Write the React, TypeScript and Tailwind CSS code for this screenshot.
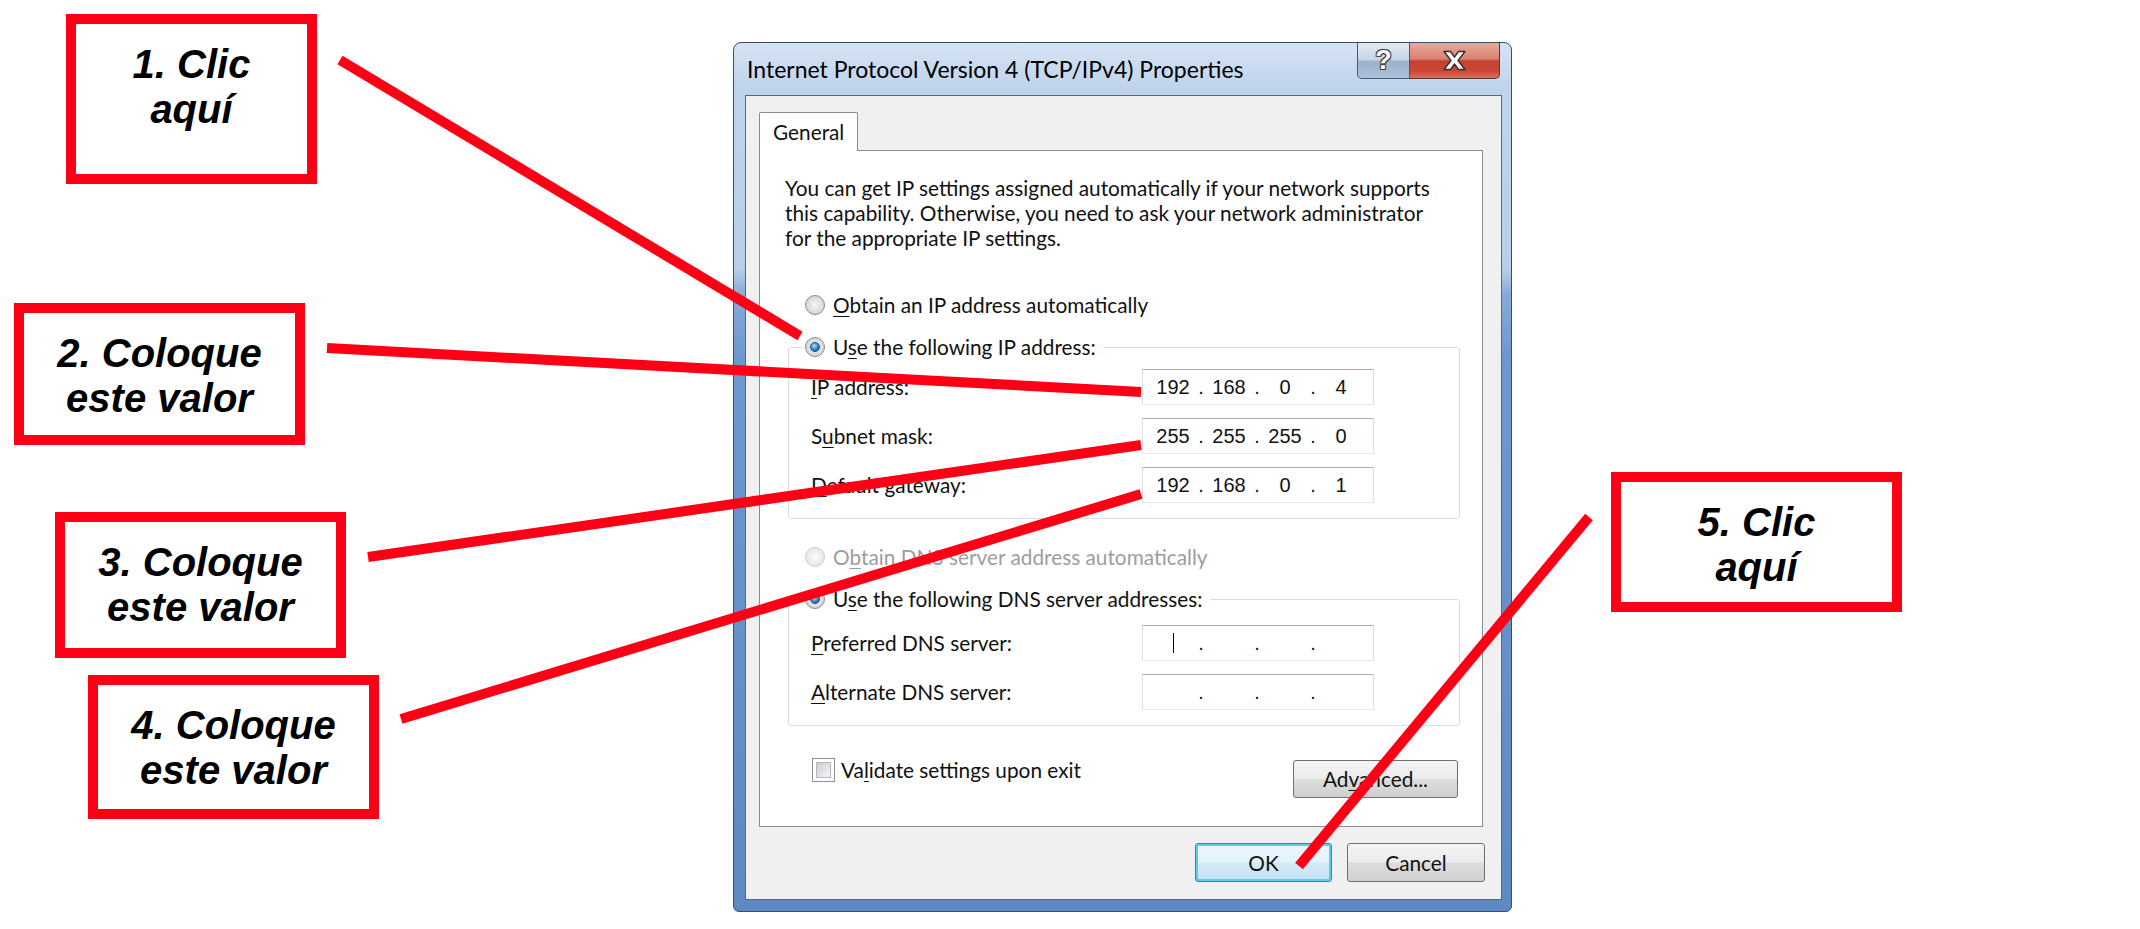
import { Fragment } from "react";

const ui = "font-['Lato','Noto_Sans',sans-serif] text-[20.8px] text-[#111]";

function Callout({ className, lines }: { className: string; lines: string[] }) {
  return (
    <div
      className={`absolute border-[10px] border-[#fe0016] bg-white flex flex-col items-center pt-[18px] font-['Liberation_Sans',Arial,sans-serif] font-bold italic text-[40px] leading-[45px] text-black ${className}`}
    >
      {lines.map((l) => (
        <span key={l} className="whitespace-nowrap">
          {l}
        </span>
      ))}
    </div>
  );
}

function Radio({ checked, disabled }: { checked?: boolean; disabled?: boolean }) {
  return (
    <span
      className={`w-[20px] h-[20px] rounded-full border shrink-0 flex items-center justify-center ${
        disabled
          ? "border-[#cfcfcf] bg-[radial-gradient(circle,#fbfbfb_0%,#e6e6e6_75%,#f2f2f2_100%)]"
          : "border-[#8a8c8f] bg-[radial-gradient(circle,#f7f7f7_0%,#d6d6d6_70%,#ededed_100%)]"
      }`}
    >
      {checked && (
        <span className="w-[10px] h-[10px] rounded-full border border-[#174a76] bg-[radial-gradient(circle_at_40%_35%,#a6e4ff_0%,#2f8fd0_50%,#0f4674_100%)]" />
      )}
    </span>
  );
}

function IpField({ octets, caret }: { octets: string[]; caret?: boolean }) {
  return (
    <div className="w-[232px] h-[36px] bg-white border border-[#dbdfe6] border-t-[#abadb3] border-b-[#e3e9ef] flex items-center pl-[8px] font-['Liberation_Sans',Arial,sans-serif] text-[20px] text-[#111]">
      {octets.map((o, i) => (
        <Fragment key={i}>
          <span className="w-[44px] h-[24px] flex items-center justify-center">
            {caret && i === 0 ? <span className="w-px h-[20px] bg-black" /> : o}
          </span>
          {i < 3 && <span className="w-[12px] text-center leading-[24px]">.</span>}
        </Fragment>
      ))}
    </div>
  );
}

function Label({ pre, u, post }: { pre?: string; u: string; post: string }) {
  return (
    <span className="whitespace-nowrap">
      {pre}
      <span className="underline underline-offset-[3px] decoration-1">{u}</span>
      {post}
    </span>
  );
}

function Group({
  header,
  rows,
  topGap,
}: {
  header: React.ReactNode;
  rows: { label: React.ReactNode; octets: string[]; caret?: boolean }[];
  topGap: string;
}) {
  return (
    <div className="ml-[28px] w-[672px] border border-[#d5dfe5] rounded-[3px] pb-[15px]">
      <div className="-mt-[13px] ml-[14px] w-fit bg-white pl-[2px] pr-[8px] h-[24px] flex items-center gap-[8px]">
        <Radio checked />
        {header}
      </div>
      <div className={`${topGap} ml-[22px] grid grid-cols-[331px_232px] gap-y-[13px] items-center`}>
        {rows.map((r, i) => (
          <Fragment key={i}>
            {r.label}
            <IpField octets={r.octets} caret={r.caret} />
          </Fragment>
        ))}
      </div>
    </div>
  );
}

function Dialog() {
  return (
    <div className="w-[779px] h-[870px] flex flex-col rounded-t-[8px] rounded-b-[6px] border border-[#3d4c5e] bg-[linear-gradient(180deg,#d5e4f4_0%,#bfd4ec_5%,#b8cfe9_26%,#86aad9_29%,#6d98cf_36%,#5d89c4_100%)]">
      <div className="h-[52px] flex justify-between items-start">
        <span className="font-['Lato','Noto_Sans',sans-serif] text-[23px] ml-[13px] mt-[13px] leading-[26px] text-black whitespace-nowrap">
          Internet Protocol Version 4 (TCP/IPv4) Properties
        </span>
        <div className="mr-[11px] flex h-[36px]">
          <div className="w-[53px] border border-t-0 border-[#4a596b] rounded-bl-[5px] bg-[linear-gradient(180deg,#e2ebf5_0%,#c6d4e5_48%,#9cb2cd_52%,#adc1d9_100%)] flex items-center justify-center">
            <span className="font-['Liberation_Sans',Arial,sans-serif] font-bold text-[27px] leading-none text-white [text-shadow:1px_1px_0_#3a3a3a,-1px_-1px_0_#3a3a3a,1px_-1px_0_#3a3a3a,-1px_1px_0_#3a3a3a]">
              ?
            </span>
          </div>
          <div className="w-[90px] border border-t-0 border-l-0 border-[#4f3a36] rounded-br-[5px] bg-[linear-gradient(180deg,#eaa99b_0%,#d88272_45%,#c4402f_52%,#cb4735_80%,#d9705d_100%)] flex items-center justify-center">
            <svg width="25" height="21" viewBox="0 0 25 21">
              <polygon
                points="2,1.5 8.5,1.5 12.5,7 16.5,1.5 23,1.5 16,10.5 23,19.5 16.5,19.5 12.5,14 8.5,19.5 2,19.5 9,10.5"
                fill="#fff"
                stroke="#3b2e2e"
                strokeWidth="1.4"
                strokeLinejoin="round"
              />
            </svg>
          </div>
        </div>
      </div>

      <div className={`${ui} ml-[11px] mr-[9px] mb-[11px] flex-1 border border-[#58697d] bg-[#f0f0f0] flex flex-col`}>
        <div className="relative z-10 mt-[16px] ml-[13px] -mb-px w-[99px] h-[39px] bg-white border border-b-0 border-[#898c95] rounded-t-[2px] pl-[13px] flex items-center">
          General
        </div>
        <div className="ml-[13px] w-[724px] h-[677px] bg-white border border-[#898c95] flex flex-col">
          <p className="ml-[25px] mt-[24px] leading-[25px] whitespace-nowrap">
            You can get IP settings assigned automatically if your network supports
            <br />
            this capability. Otherwise, you need to ask your network administrator
            <br />
            for the appropriate IP settings.
          </p>

          <div className="mt-[43px] ml-[45px] h-[24px] flex items-center gap-[8px]">
            <Radio />
            <Label u="O" post="btain an IP address automatically" />
          </div>

          <div className="mt-[30px]">
            <Group
              topGap="mt-[10px]"
              header={<Label pre="U" u="s" post="e the following IP address:" />}
              rows={[
                { label: <Label u="I" post="P address:" />, octets: ["192", "168", "0", "4"] },
                { label: <Label pre="S" u="u" post="bnet mask:" />, octets: ["255", "255", "255", "0"] },
                { label: <Label u="D" post="efault gateway:" />, octets: ["192", "168", "0", "1"] },
              ]}
            />
          </div>

          <div className="mt-[26px] ml-[45px] h-[24px] flex items-center gap-[8px] text-[#9d9d9d]">
            <Radio disabled />
            <Label pre="O" u="b" post="tain DNS server address automatically" />
          </div>

          <div className="mt-[30px]">
            <Group
              topGap="mt-[14px]"
              header={<Label pre="U" u="s" post="e the following DNS server addresses:" />}
              rows={[
                { label: <Label u="P" post="referred DNS server:" />, octets: ["", "", "", ""], caret: true },
                { label: <Label u="A" post="lternate DNS server:" />, octets: ["", "", "", ""] },
              ]}
            />
          </div>

          <div className="mt-[32px] ml-[52px] mr-[24px] flex justify-between items-start">
            <div className="flex items-center gap-[6px] h-[24px]">
              <span className="w-[23px] h-[24px] border border-[#8e8f8f] bg-white p-[3px] shrink-0">
                <span className="block w-full h-full border border-[#b4b8bd] bg-[linear-gradient(135deg,#c8ccd2_0%,#e4e6e9_60%,#f7f7f7_100%)]" />
              </span>
              <Label pre="Va" u="l" post="idate settings upon exit" />
            </div>
            <button className="mt-[2px] w-[165px] h-[38px] rounded-[3px] border border-[#707070] bg-[linear-gradient(180deg,#f4f4f4_0%,#ececec_48%,#dddddd_52%,#cfcfcf_100%)] flex items-center justify-center">
              <Label pre="Ad" u="v" post="anced..." />
            </button>
          </div>
        </div>

        <div className="mt-[16px] mr-[16px] flex justify-end gap-[15px]">
          <button className="w-[137px] h-[39px] rounded-[3px] border border-[#3c7fb1] shadow-[inset_0_0_0_2px_#5ccaf3] bg-[linear-gradient(180deg,#edf7fd_0%,#e2f2fb_48%,#d2ebf8_52%,#c4e3f4_100%)] flex items-center justify-center">
            OK
          </button>
          <button className="w-[138px] h-[39px] rounded-[3px] border border-[#707070] bg-[linear-gradient(180deg,#f4f4f4_0%,#ececec_48%,#dddddd_52%,#cfcfcf_100%)] flex items-center justify-center">
            Cancel
          </button>
        </div>
      </div>
    </div>
  );
}

export default function App() {
  return (
    <div className="relative w-[2140px] h-[929px] bg-white overflow-hidden">
      <div className="pt-[42px] pl-[733px]">
        <Dialog />
      </div>

      <Callout className="left-[66px] top-[14px] w-[251px] h-[170px]" lines={["1. Clic", "aquí"]} />
      <Callout className="left-[14px] top-[303px] w-[291px] h-[142px]" lines={["2. Coloque", "este valor"]} />
      <Callout className="left-[55px] top-[512px] w-[291px] h-[146px]" lines={["3. Coloque", "este valor"]} />
      <Callout className="left-[88px] top-[675px] w-[291px] h-[144px]" lines={["4. Coloque", "este valor"]} />
      <Callout className="left-[1611px] top-[472px] w-[291px] h-[140px]" lines={["5. Clic", "aquí"]} />

      <svg className="absolute inset-0 pointer-events-none" width="2140" height="929">
        <g stroke="#fe0016" strokeWidth="10">
          <line x1="340" y1="60" x2="800" y2="336" />
          <line x1="327" y1="348" x2="1141" y2="392" />
          <line x1="368" y1="557" x2="1141" y2="445" />
          <line x1="401" y1="719" x2="1141" y2="494" />
          <line x1="1589" y1="517" x2="1299" y2="866" />
        </g>
      </svg>
    </div>
  );
}
